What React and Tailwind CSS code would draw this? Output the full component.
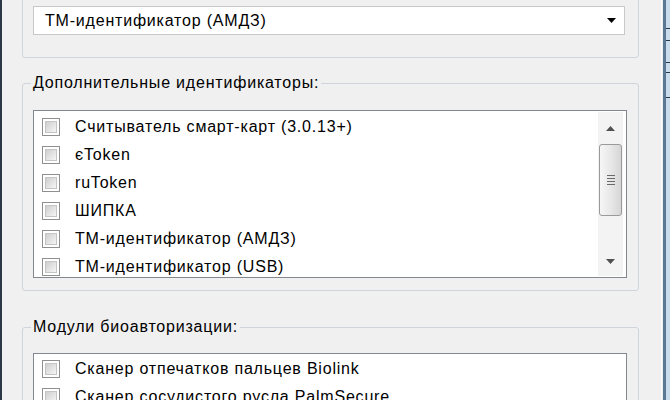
function Checkbox() {
  return (
    <div className="w-[18px] h-[18px] shrink-0 border border-[#8e8f8f] bg-white p-[2px]">
      <div className="w-full h-full border border-[#c4c4c4] bg-gradient-to-br from-[#cfcfcf] to-[#f5f5f5]" />
    </div>
  );
}

function Row({ children }) {
  return (
    <div className="h-[28px] shrink-0 flex items-center pl-[8px]">
      <Checkbox />
      <span className="ml-[15px] whitespace-nowrap">{children}</span>
    </div>
  );
}

function Scrollbar() {
  return (
    <div className="w-[25px] shrink-0 mr-[3px] mt-[1px] mb-[1px] bg-[#f3f3f3] flex flex-col items-center">
      <div className="h-[32px] w-full flex items-center justify-center">
        <svg width="9" height="5" viewBox="0 0 9 5">
          <path d="M0 5 L4.5 0 L9 5 Z" fill="#505050" />
        </svg>
      </div>
      <div className="h-[72px] w-[23px] rounded-[3px] border border-[#9a9a9a] bg-gradient-to-r from-[#f6f6f6] via-[#e8e8e8] to-[#d6d6d6] flex flex-col items-center justify-center gap-[2px]">
        <div className="w-[8px] h-[1px] bg-[#6a6a6a]" />
        <div className="w-[8px] h-[1px] bg-[#6a6a6a]" />
        <div className="w-[8px] h-[1px] bg-[#6a6a6a]" />
        <div className="w-[8px] h-[1px] bg-[#6a6a6a]" />
      </div>
      <div className="flex-1" />
      <div className="h-[30px] w-full flex items-center justify-center">
        <svg width="9" height="5" viewBox="0 0 9 5">
          <path d="M0 0 L9 0 L4.5 5 Z" fill="#505050" />
        </svg>
      </div>
    </div>
  );
}

export default function App() {
  return (
    <div className="w-[670px] h-[400px] overflow-hidden flex bg-[#f0f0f0] font-['Liberation_Sans',Arial,sans-serif] text-[16px] leading-[18px] tracking-[0.8px] text-black">
      <div className="w-[2px] shrink-0 bg-[#2a3848]" />
      <div className="w-[20px] shrink-0" />
      <div className="w-[617px] shrink-0 flex flex-col">
        {/* Group 1 (top cut off) */}
        <div className="mt-[-40px] border border-[#cfd5da] rounded-[3px] pt-[45px] pb-[22px] pl-[10px]">
          <div className="w-[592px] h-[29px] bg-white border border-[#c8c8c8] flex items-center pl-[11px] pr-[8px]">
            <span className="flex-1 whitespace-nowrap">ТМ-идентификатор (АМДЗ)</span>
            <svg width="9" height="5" viewBox="0 0 9 5">
              <path d="M0 0 L9 0 L4.5 5 Z" fill="#000" />
            </svg>
          </div>
        </div>

        {/* Group 2 */}
        <fieldset className="mt-[16px] border border-[#cfd5da] rounded-[3px] pl-[10px] pr-[11px] pt-[18px] pb-[12px]">
          <legend className="px-[2px] -ml-[2px] leading-[18px]">Дополнительные идентификаторы:</legend>
          <div className="w-[594px] h-[168px] bg-white border border-[#828790] flex overflow-hidden">
            <div className="flex-1 flex flex-col pt-[2px] overflow-hidden">
              <Row>Считыватель смарт-карт (3.0.13+)</Row>
              <Row>єToken</Row>
              <Row>ruToken</Row>
              <Row>ШИПКА</Row>
              <Row>ТМ-идентификатор (АМДЗ)</Row>
              <Row>ТМ-идентификатор (USB)</Row>
            </div>
            <Scrollbar />
          </div>
        </fieldset>

        {/* Group 3 */}
        <fieldset className="mt-[27px] border border-[#cfd5da] rounded-[3px] pl-[10px] pr-[11px] pt-[17px] pb-[12px]">
          <legend className="px-[2px] -ml-[2px] leading-[18px]">Модули биоавторизации:</legend>
          <div className="w-[594px] h-[120px] bg-white border border-[#828790] flex flex-col pt-[1px] overflow-hidden">
            <Row>Сканер отпечатков пальцев Biolink</Row>
            <Row>Сканер сосудистого русла PalmSecure</Row>
            <Row>Сканер</Row>
          </div>
        </fieldset>
      </div>
      <div className="w-[22px] shrink-0" />
      <div className="w-[1px] shrink-0 bg-[#fbfbfb]" />
      <div className="w-[1px] shrink-0" />
      <div className="w-[3px] shrink-0 bg-[#5a7894]" />
      <div className="flex-1 bg-[#c9dbec] flex flex-col">
        <div className="h-[28px] shrink-0" />
        <div className="h-[1px] shrink-0 bg-[#2a3848]" />
        <div className="h-[11px] shrink-0" />
        <div className="h-[1px] shrink-0 bg-[#2a3848]" />
        <div className="h-[21px] shrink-0" />
        <div className="h-[1px] shrink-0 bg-[#2a3848]" />
        <div className="h-[9px] shrink-0" />
        <div className="h-[1px] shrink-0 bg-[#2a3848]" />
        <div className="h-[24px] shrink-0" />
        <div className="h-[1px] shrink-0 bg-[#2a3848]" />
      </div>
    </div>
  );
}
